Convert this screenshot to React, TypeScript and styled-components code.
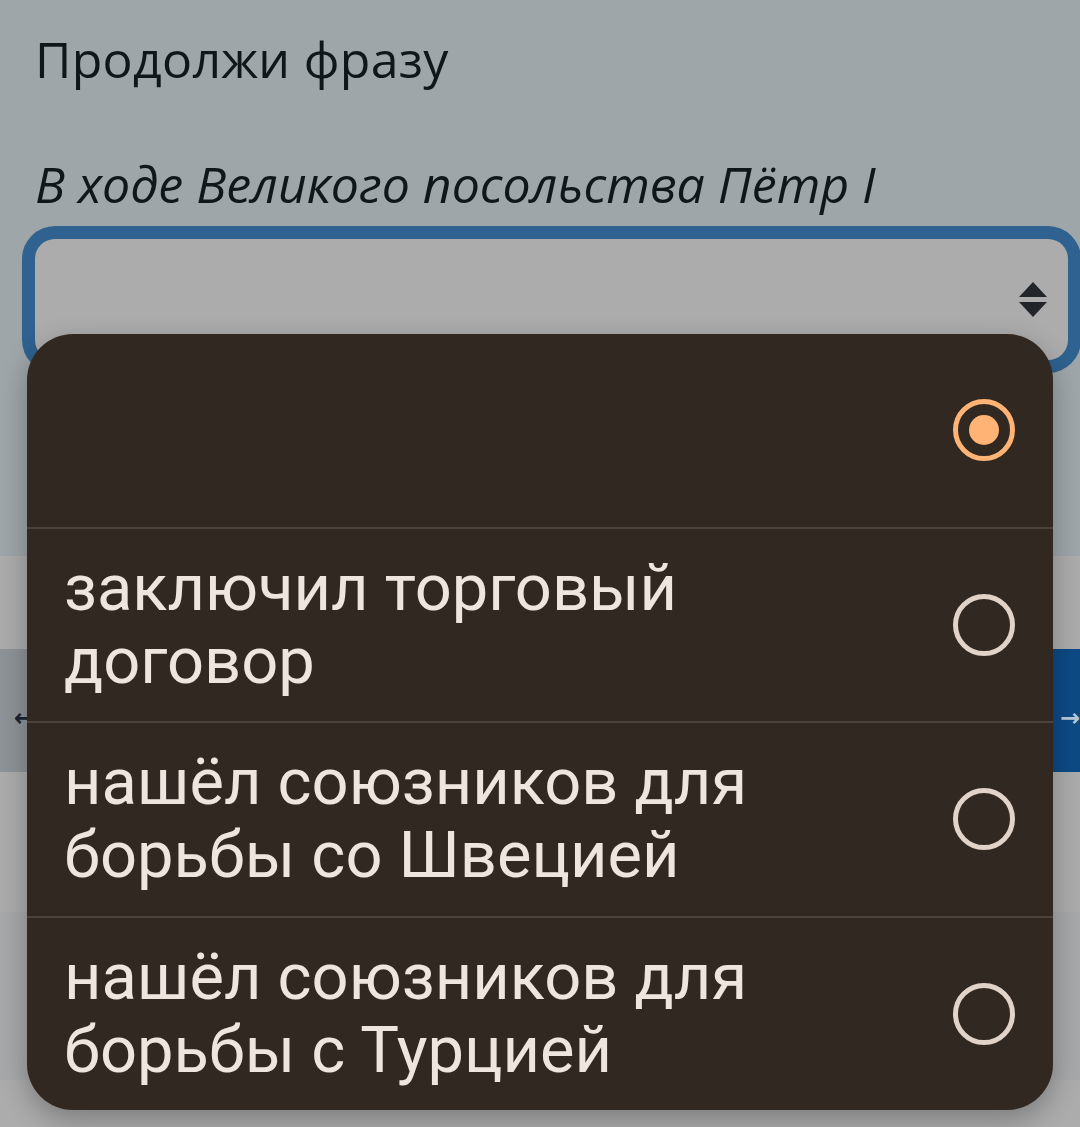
import React from 'react';
import styled, { createGlobalStyle } from 'styled-components';

interface Option {
  id: number;
  label: string;
  selected: boolean;
}

const options: Option[] = [
  { id: 0, label: '', selected: true },
  { id: 1, label: 'заключил торговый договор', selected: false },
  { id: 2, label: 'нашёл союзников для борьбы со Швецией', selected: false },
  { id: 3, label: 'нашёл союзников для борьбы с Турцией', selected: false },
];

const GlobalStyle = createGlobalStyle`
  html, body {
    margin: 0;
    padding: 0;
    background: #acacac;
  }
  * {
    box-sizing: border-box;
  }
`;

const Page = styled.div`
  position: relative;
  width: 1080px;
  height: 1127px;
  overflow: hidden;
  display: flex;
  flex-direction: column;
`;

const Question = styled.section`
  height: 556px;
  background: #9ea6a9;
  padding: 27px 12px 0 35px;
  display: flex;
  flex-direction: column;
`;

const Title = styled.h1`
  margin: 0;
  font-family: 'Open Sans', 'Noto Sans', sans-serif;
  font-weight: 400;
  font-size: 50px;
  line-height: 64px;
  color: #0e1819;
  letter-spacing: 0.3px;
`;

const Phrase = styled.p`
  margin: 61px 0 0;
  font-family: 'Open Sans', 'Noto Sans', sans-serif;
  font-style: italic;
  font-weight: 400;
  font-size: 50px;
  line-height: 64px;
  color: #0e1819;
`;

const SelectField = styled.div`
  margin-top: 23px;
  height: 121px;
  border-radius: 20px;
  background: #acacac;
  box-shadow: 0 0 0 13px #2f6290;
  display: flex;
  align-items: center;
  justify-content: flex-end;
  padding-right: 21px;
`;

const Strip = styled.div<{ $height: number; $color: string }>`
  height: ${(p) => p.$height}px;
  background: ${(p) => p.$color};
`;

const NavRow = styled.div`
  height: 123px;
  display: grid;
  grid-template-columns: 1fr 1fr;
`;

const NavButton = styled.div<{ $primary?: boolean }>`
  background: ${(p) => (p.$primary ? '#0d4a85' : '#8e9398')};
  color: ${(p) => (p.$primary ? '#b9c8d8' : '#1b2430')};
  display: flex;
  align-items: center;
  justify-content: ${(p) => (p.$primary ? 'flex-end' : 'flex-start')};
  padding: 14px 0 0 14px;
  font-family: 'DejaVu Sans', sans-serif;
  font-weight: 700;
  font-size: 24px;
`;

const Menu = styled.div`
  position: absolute;
  left: 27px;
  top: 334px;
  width: 1026px;
  height: 776px;
  border-radius: 46px;
  background: #322822;
  box-shadow: 0 10px 28px rgba(0, 0, 0, 0.28);
  overflow: hidden;
  display: flex;
  flex-direction: column;
`;

const MenuItem = styled.div<{ $last?: boolean }>`
  flex: 1;
  display: flex;
  align-items: center;
  justify-content: space-between;
  padding: 0 38px 0 37px;
  border-bottom: ${(p) => (p.$last ? 'none' : '2px solid #4c433d')};
`;

const ItemLabel = styled.span`
  font-family: 'Roboto', 'Noto Sans', sans-serif;
  font-size: 65px;
  line-height: 73px;
  color: #efe5df;
  max-width: 820px;
`;

const Radio = styled.span<{ $checked: boolean }>`
  flex-shrink: 0;
  width: 62px;
  height: 62px;
  border-radius: 50%;
  border: 5px solid ${(p) => (p.$checked ? '#ffb374' : '#e2d3c9')};
  display: flex;
  align-items: center;
  justify-content: center;

  &::after {
    content: '';
    display: ${(p) => (p.$checked ? 'block' : 'none')};
    width: 30px;
    height: 30px;
    border-radius: 50%;
    background: #ffb374;
  }
`;

const SortIcon = () => (
  <svg width="28" height="36" viewBox="0 0 28 36">
    <path d="M14 0 L28 15 L0 15 Z" fill="#22262b" />
    <path d="M0 20 L28 20 L14 35 Z" fill="#22262b" />
  </svg>
);

const App: React.FC = () => {
  return (
    <Page>
      <GlobalStyle />
      <Question>
        <Title>Продолжи фразу</Title>
        <Phrase>В ходе Великого посольства Пётр I</Phrase>
        <SelectField>
          <SortIcon />
        </SelectField>
      </Question>
      <Strip $height={93} $color="#acacac" />
      <NavRow>
        <NavButton>←</NavButton>
        <NavButton $primary>→</NavButton>
      </NavRow>
      <Strip $height={140} $color="#acacac" />
      <Strip $height={168} $color="#a6a8aa" />
      <Strip $height={47} $color="#acacac" />

      <Menu>
        {options.map((option, i) => (
          <MenuItem key={option.id} $last={i === options.length - 1}>
            <ItemLabel>{option.label}</ItemLabel>
            <Radio $checked={option.selected} />
          </MenuItem>
        ))}
      </Menu>
    </Page>
  );
};

export default App;
